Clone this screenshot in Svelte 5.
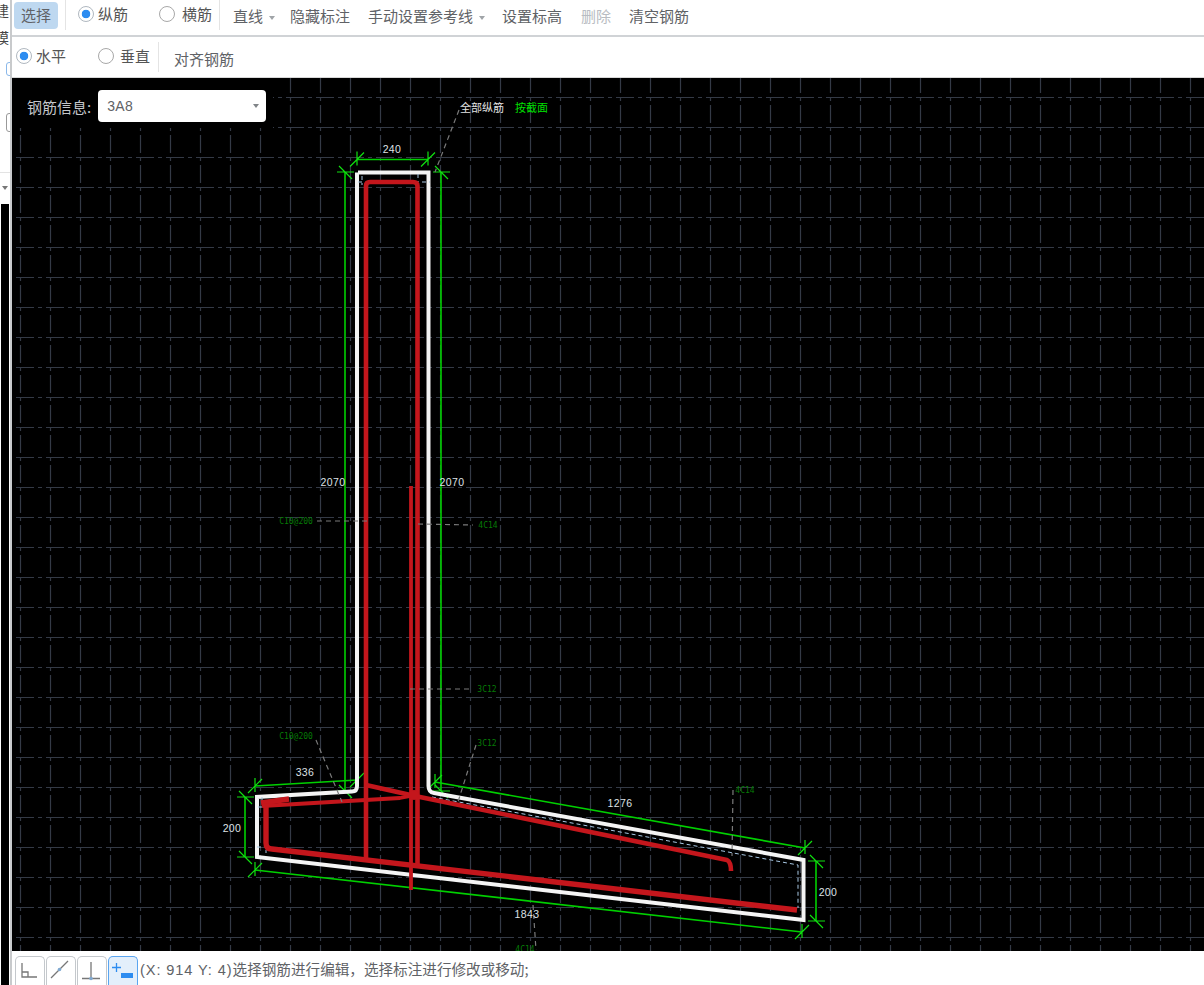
<script>
	// grid positions are in page coordinates, the svg viewBox starts at the canvas corner
	const gridX = Array.from({ length: 40 }, (_, i) => 20 + i * 30);
	const gridY = Array.from({ length: 30 }, (_, i) => 97 + i * 30);

	const dims = [
		{ x: 392, y: 153, t: '240' },
		{ x: 333, y: 486, t: '2070' },
		{ x: 452, y: 486, t: '2070' },
		{ x: 305, y: 776, t: '336' },
		{ x: 232, y: 832, t: '200' },
		{ x: 620, y: 807, t: '1276' },
		{ x: 828, y: 896, t: '200' },
		{ x: 527, y: 918, t: '1843' }
	];

	const notes = [
		{ x: 296, y: 524, t: 'C10@200' },
		{ x: 488, y: 528, t: '4C14' },
		{ x: 487, y: 692, t: '3C12' },
		{ x: 487, y: 746, t: '3C12' },
		{ x: 296, y: 739, t: 'C10@200' },
		{ x: 745, y: 793, t: '4C14' },
		{ x: 525, y: 952, t: '4C14' }
	];

	const leaders = [
		'M459 110 L435 172',
		'M317 521 L367 521',
		'M418 524 L473 525',
		'M410 689 L473 689',
		'M476 745 L457 805',
		'M316 740 L342 802',
		'M733 790 L732 856',
		'M533 905 L536 950'
	];

	// ends of horizontal dimensions: upright bar and a "/" slash
	const ticksH = [
		[357, 159.5], [428, 159.5], [255, 786], [357, 780],
		[255, 870], [802, 932], [435, 782], [805, 848]
	];
	// ends of vertical dimensions: flat bar and a "\" slash
	const ticksV = [
		[345, 172], [441, 172], [345, 791], [441, 791],
		[245, 797], [245, 857], [816, 861], [816, 921]
	];
</script>

<div class="page">
	<div class="side">
		<span class="c1">建</span>
		<span class="c2">模</span>
		<i class="blue"></i>
		<i class="box"></i>
		<i class="rule"></i>
		<i class="caret-side"></i>
		<div class="dark"></div>
	</div>

	<div class="main">
		<div class="bar first">
			<button class="btn on">选择</button>
			<span class="sep a"></span>
			<label class="radio r1"><i class="dot checked"></i>纵筋</label>
			<label class="radio r2"><i class="dot"></i>横筋</label>
			<span class="sep b"></span>
			<span class="item i1">直线<i class="caret"></i></span>
			<span class="item i2">隐藏标注</span>
			<span class="item i3">手动设置参考线<i class="caret"></i></span>
			<span class="item i4">设置标高</span>
			<span class="item i5 off">删除</span>
			<span class="item i7">清空钢筋</span>
		</div>
		<div class="bar second">
			<label class="radio r3"><i class="dot checked"></i>水平</label>
			<label class="radio r4"><i class="dot"></i>垂直</label>
			<span class="sep c"></span>
			<span class="item i6">对齐钢筋</span>
		</div>

		<div class="canvas">
			<svg viewBox="12 78 1192 873" width="1192" height="873">
				{#each gridX as x}
					<line class="grid" x1={x + 0.5} y1="75" x2={x + 0.5} y2="951" />
				{/each}
				{#each gridY as y}
					<line class="grid" x1="16" y1={y + 0.5} x2="1204" y2={y + 0.5} />
				{/each}
				<rect x="12" y="78" width="261" height="50" fill="#000" />

				<!-- dimension lines -->
				<g class="green">
					<path d="M357 159.5 H428" />
					<path d="M345 172 V791" />
					<path d="M441 172 V791" />
					<path d="M255 786 L357 780" />
					<path d="M245 797 V857" />
					<path d="M255 870 L802 932" />
					<path d="M435 782 L805 848" />
					<path d="M816 861 V921" />
					{#each ticksH as [x, y]}
						<path class="tick" d="M{x} {y - 8} V{y + 6} M{x - 7} {y + 7} L{x + 7} {y - 7}" />
					{/each}
					{#each ticksV as [x, y]}
						<path class="tick" d="M{x - 8} {y} H{x + 9} M{x - 6} {y - 6} L{x + 7} {y + 7}" />
					{/each}
				</g>

				<!-- section outline -->
				<path
					class="outline"
					d="M358 172.5 H428.5 V786 Q428.5 792 434 793 L803.5 860 V920 L257 857 V797 L352 791.5 Q357 791.5 357 786 V172.5"
				/>

				<path class="rebar-guide" d="M432 797 L798 865 V908" />
				<path class="rebar-guide" d="M362 176 V185 M358 182 H364 M418 174 V182 M422 182 H430 M262 797 V803 M258 807 H264 M257 847 H262 M266 850 V853" />

				<!-- bars -->
				<g class="red">
					<path d="M366 858 V186 Q366 182 370 182 H413 Q417.5 182 417.5 186 V867" />
					<path class="thin" d="M411 486 V890" />
					<path d="M366 785 L415 796 L727 860 Q731 862 731 871" />
					<path class="thick" d="M266 803 V843 Q266 849 272 849 L797 910" />
					<path d="M261 803 L289 799" class="thick" />
					<path class="thin" d="M262 806 L400 798 L416 795" />
					<circle cx="414" cy="795" r="5" />
				</g>

				{#each leaders as d}
					<path class="leader" {d} />
				{/each}

				{#each dims as d}
					<text class="dim" x={d.x} y={d.y}>{d.t}</text>
				{/each}
				{#each notes as n}
					<text class="note" x={n.x} y={n.y}>{n.t}</text>
				{/each}
				<text class="head" x="460" y="112">全部纵筋</text>
				<text class="head lit" x="515" y="112">按截面</text>
			</svg>

			<div class="info">
				<span class="info-label">钢筋信息:</span>
				<div class="select">3A8<i class="caret dark-caret"></i></div>
			</div>
		</div>

		<div class="status">
			<div class="tools">
				<button class="tool" aria-label="正交">
					<svg width="28" height="29" viewBox="0 0 28 29"><path d="M6 6 V20 H21 M6 15 H12 V20" /></svg>
				</button>
				<button class="tool" aria-label="斜线">
					<svg width="28" height="29" viewBox="0 0 28 29"><path d="M4 21 L21 4" /><circle cx="12.5" cy="12.5" r="1.8" /></svg>
				</button>
				<button class="tool" aria-label="垂直">
					<svg width="28" height="29" viewBox="0 0 28 29"><path d="M13 5 V21.5 M4 21.5 H22" /><circle cx="13" cy="21.5" r="1.8" /></svg>
				</button>
				<button class="tool active" aria-label="增减">
					<svg width="28" height="29" viewBox="0 0 28 29"><path class="plus" d="M7.5 6 V15 M3 10.5 H12" /><rect x="12" y="16" width="12" height="5" /></svg>
				</button>
			</div>
			<span class="msg"><span class="coord">(X: 914 Y: 4)</span>选择钢筋进行编辑，选择标注进行修改或移动;</span>
		</div>
	</div>
</div>

<style>
	:global(body) {
		margin: 0;
		background: #fff;
	}

	.page {
		display: flex;
		width: 1204px;
		height: 985px;
		overflow: hidden;
		font-family: 'Noto Sans CJK SC', 'Noto Sans', sans-serif;
		color: #606266;
	}

	.side {
		position: relative;
		flex: none;
		width: 10px;
		border-right: 2px solid #c8cacc;
		overflow: hidden;
		background: #fff;
	}

	.side span {
		position: absolute;
		left: -5px;
		font-size: 14px;
		line-height: 16px;
		color: #444;
	}

	.c1 {
		top: 2px;
	}

	.c2 {
		top: 29px;
	}

	.side i {
		position: absolute;
		display: block;
	}

	.blue {
		left: 6px;
		top: 62px;
		width: 6px;
		height: 12px;
		border: 1px solid #8ab8ea;
		border-radius: 3px;
	}

	.box {
		left: 6px;
		top: 113px;
		width: 6px;
		height: 17px;
		border: 1px solid #9a9a9a;
		border-radius: 3px;
	}

	.rule {
		left: 0;
		top: 172px;
		width: 10px;
		height: 1px;
		background: #e3e3e3;
	}

	.caret-side {
		left: 2px;
		top: 186px;
		border: 3px solid transparent;
		border-top: 4px solid #777;
	}

	.dark {
		position: absolute;
		left: 1px;
		right: 1px;
		top: 204px;
		bottom: 0;
		background: #000;
	}

	.main {
		flex: 1;
		display: flex;
		flex-direction: column;
		min-width: 0;
	}

	.bar {
		display: flex;
		align-items: center;
		flex: none;
		background: #fff;
		font-size: 15px;
		line-height: 20px;
		white-space: nowrap;
	}

	.first {
		height: 30px;
		border-bottom: 2px solid #d0d3d6;
		padding: 0 0 5px 2px;
	}

	.second {
		height: 40px;
		border-bottom: 1px solid #d8d8d8;
	}

	.btn {
		width: 44px;
		height: 27px;
		padding: 0;
		border: none;
		border-radius: 4px;
		background: #bed8f0;
		color: #606266;
		font: inherit;
	}

	.sep {
		display: block;
		width: 1px;
		height: 30px;
		background: #e4e4e4;
	}

	.sep.a {
		margin-left: 7px;
	}

	.sep.b {
		margin-left: 7px;
	}

	.sep.c {
		margin-left: 8px;
	}

	.radio {
		display: flex;
		align-items: center;
		gap: 4px;
		color: #555;
	}

	.r1 {
		margin-left: 12px;
		margin-top: -2px;
	}

	.r2 {
		margin-left: 31px;
		margin-top: -2px;
		gap: 7px;
	}

	.r3 {
		margin-left: 4px;
		margin-top: -2px;
	}

	.r4 {
		margin-left: 32px;
		margin-top: -2px;
		gap: 6px;
	}

	.dot {
		display: block;
		box-sizing: border-box;
		width: 16px;
		height: 16px;
		border: 1px solid #a8a8a8;
		border-radius: 50%;
		background: #fff;
	}

	.dot.checked {
		border-color: #b0b8c0;
		background: radial-gradient(circle, #2d8cf0 0 4px, #fff 4.6px);
	}

	.item {
		display: flex;
		align-items: center;
		margin-top: 2px;
	}

	.i1 {
		margin-left: 13px;
	}

	.i2 {
		margin-left: 15px;
	}

	.i3 {
		margin-left: 18px;
	}

	.i4 {
		margin-left: 17px;
	}

	.i5 {
		margin-left: 19px;
	}

	.i6 {
		margin-left: 15px;
		margin-top: 3px;
	}

	.i7 {
		margin-left: 18px;
	}

	.off {
		color: #b8bcc2;
	}

	.caret {
		display: block;
		margin: 3px 0 0 6px;
		border: 3px solid transparent;
		border-top: 4px solid #a0a4a8;
		border-bottom: 0;
	}

	.canvas {
		position: relative;
		flex: 1;
		min-height: 0;
		background: #000;
		overflow: hidden;
	}

	.canvas > svg {
		display: block;
	}

	.grid {
		stroke: #343a46;
		stroke-width: 1.2;
		stroke-dasharray: 18 4 4 4;
	}

	.green path {
		fill: none;
		stroke: #00d000;
		stroke-width: 1.6;
	}

	.green .tick {
		stroke: #10e010;
		stroke-width: 1.2;
	}

	.outline {
		fill: none;
		stroke: #f4f4f4;
		stroke-width: 4;
		stroke-linejoin: miter;
	}

	.red path {
		fill: none;
		stroke: #c4161c;
		stroke-width: 4.6;
		stroke-linejoin: round;
	}

	.red .thick {
		stroke-width: 5.4;
	}

	.red .thin {
		stroke-width: 3.8;
	}

	.red circle {
		fill: #c4161c;
	}

	.rebar-guide {
		fill: none;
		stroke: #a8c8e4;
		stroke-width: 1;
		stroke-dasharray: 4 3;
	}

	.leader {
		fill: none;
		stroke: #7a7a7a;
		stroke-width: 1.2;
		stroke-dasharray: 5 4;
	}

	.dim {
		fill: #dfe2e6;
		font-family: 'Liberation Sans', sans-serif;
		font-size: 10.5px;
		letter-spacing: 0.4px;
		text-anchor: middle;
	}

	.note {
		fill: #067a06;
		font-family: 'DejaVu Sans Mono', monospace;
		font-size: 8px;
		text-anchor: middle;
	}

	.head {
		fill: #e4e4e4;
		font-size: 11px;
	}

	.head.lit {
		fill: #00e000;
	}

	.info {
		position: absolute;
		left: 15px;
		top: 12px;
		display: flex;
		align-items: center;
		gap: 7px;
	}

	.info-label {
		color: #c4c6ca;
		font-size: 15px;
	}

	.select {
		position: relative;
		box-sizing: border-box;
		width: 168px;
		height: 32px;
		padding-left: 9px;
		border-radius: 4px;
		background: #fff;
		font-family: 'Liberation Sans', sans-serif;
		font-size: 14px;
		line-height: 32px;
		letter-spacing: 0.3px;
	}

	.dark-caret {
		position: absolute;
		right: 7px;
		top: 14px;
		margin: 0;
		border-top-color: #808488;
	}

	.status {
		flex: none;
		display: flex;
		align-items: flex-end;
		height: 34px;
		background: #fff;
		overflow: hidden;
	}

	.tools {
		display: flex;
		gap: 1px;
		margin-left: 3px;
		height: 29px;
	}

	.tool {
		box-sizing: content-box;
		width: 28px;
		height: 29px;
		padding: 0;
		border: 1px solid #c4c8cc;
		border-bottom: none;
		border-radius: 5px 5px 0 0;
		background: #fff;
	}

	.tool svg {
		display: block;
	}

	.tool path {
		fill: none;
		stroke: #777;
		stroke-width: 1.3;
	}

	.tool circle {
		fill: #7fa8d0;
	}

	.tool.active {
		border-color: #5aa5f0;
		background: #e3effb;
	}

	.tool .plus {
		stroke: #2d8cf0;
	}

	.tool rect {
		fill: #2d8cf0;
	}

	.msg {
		margin-left: 2px;
		margin-top: 2px;
		align-self: center;
		font-size: 14.6px;
		line-height: 18px;
		white-space: nowrap;
	}

	.coord {
		font-family: 'Liberation Sans', sans-serif;
		letter-spacing: 0.9px;
	}
</style>
